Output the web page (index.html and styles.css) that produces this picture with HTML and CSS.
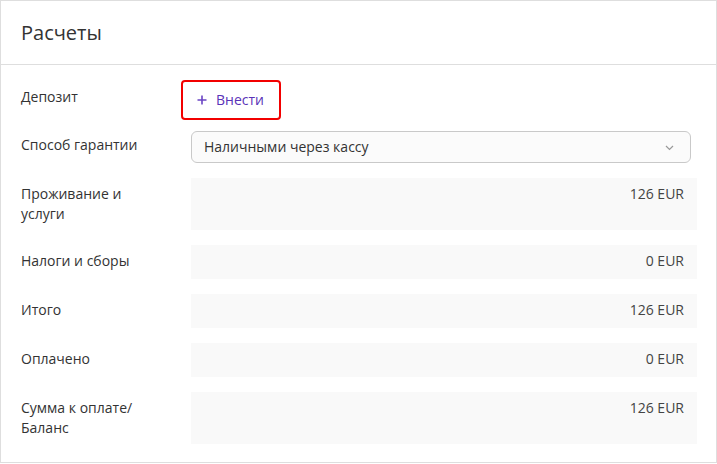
FILE: index.html
```html
<!DOCTYPE html>
<html lang="ru">
<head>
<meta charset="utf-8">
<link rel="stylesheet" href="styles.css">
</head>
<body>
<div class="card">
  <div class="card-header">Расчеты</div>
  <div class="card-body">
    <div class="row row-deposit">
      <div class="label">Депозит</div>
      <div class="field">
        <div class="highlight">
          <button class="add-btn" type="button">
            <svg class="plus" width="10" height="10" viewBox="0 0 10 10"><path d="M5 0.5V9.5M0.5 5H9.5" stroke="currentColor" stroke-width="1.6" fill="none"/></svg>
            <span>Внести</span>
          </button>
        </div>
      </div>
    </div>
    <div class="row row-select">
      <div class="label">Способ гарантии</div>
      <div class="field">
        <div class="select">
          <span>Наличными через кассу</span>
          <svg class="chevron" width="9" height="6" viewBox="0 0 9 6"><path d="M1 1L4.5 4.5L8 1" stroke="#999" stroke-width="1.2" fill="none"/></svg>
        </div>
      </div>
    </div>
    <div class="row">
      <div class="label">Проживание и<br>услуги</div>
      <div class="value tall">126 EUR</div>
    </div>
    <div class="row">
      <div class="label">Налоги и сборы</div>
      <div class="value">0 EUR</div>
    </div>
    <div class="row">
      <div class="label">Итого</div>
      <div class="value">126 EUR</div>
    </div>
    <div class="row">
      <div class="label">Оплачено</div>
      <div class="value">0 EUR</div>
    </div>
    <div class="row">
      <div class="label">Сумма к оплате/<br>Баланс</div>
      <div class="value tall">126 EUR</div>
    </div>
  </div>
</div>
</body>
</html>
```

FILE: styles.css
```css
* { box-sizing: border-box; }
html, body { margin: 0; padding: 0; background: #fff; }
body {
  font-family: "Open Sans", "Noto Sans", "Liberation Sans", sans-serif;
  font-size: 14px;
  line-height: 20px;
  color: #333;
}
.card {
  width: 717px;
  border: 1px solid #dedede;
}
.card-header {
  height: 64px;
  padding: 0 20px;
  display: flex;
  align-items: center;
  font-size: 20px;
  color: #333;
  border-bottom: 1px solid #dedede;
}
.card-body {
  padding: 15px 19px 18px 20px;
  display: flex;
  flex-direction: column;
  gap: 15px;
}
.row {
  display: grid;
  grid-template-columns: 170px 1fr;
}
.label {
  padding-top: 6px;
  color: #333;
}
.row-deposit .label { padding-top: 7px; }
.row-select { margin-top: -4px; }
.row-select .label { padding-top: 4px; }
.highlight {
  width: 100px;
  height: 40px;
  margin-left: -10px;
  border: 2px solid #f20000;
  border-radius: 4px;
  display: flex;
  align-items: center;
}
.add-btn {
  border: 0;
  background: transparent;
  font: inherit;
  color: #5a32b8;
  display: flex;
  align-items: center;
  gap: 9px;
  padding: 0 0 0 14px;
  cursor: pointer;
}
.plus { color: #6a44c4; }
.select {
  height: 32px;
  border: 1px solid #c9c9c9;
  border-radius: 6px;
  background: #fbfbfb;
  display: flex;
  align-items: center;
  justify-content: space-between;
  padding: 0 16px 0 12px;
  color: #333;
  margin-right: 6px;
}
.chevron { margin-top: 1px; }
.value {
  background: #f9f9f9;
  padding: 6px 13px 8px 12px;
  height: 34px;
  text-align: right;
  color: #444;
}
.value.tall { height: 52px; }
```
